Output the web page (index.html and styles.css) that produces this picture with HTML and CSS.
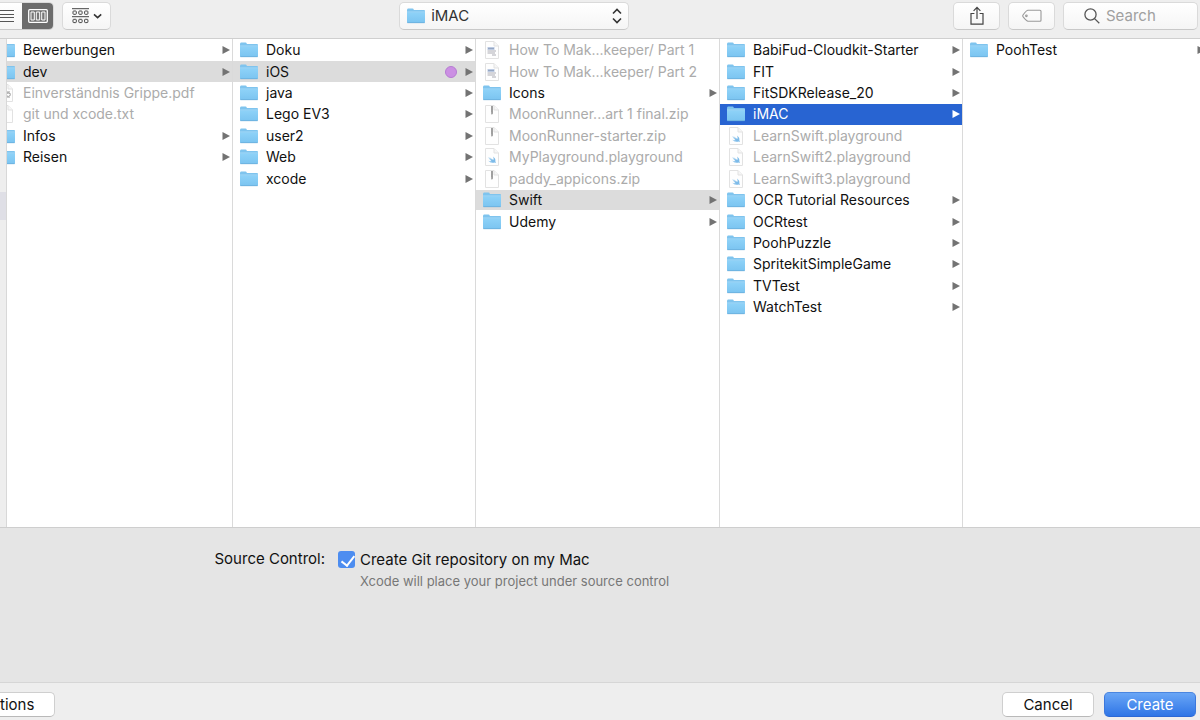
FILE: index.html
```html
<!DOCTYPE html>
<html lang="en">
<head>
<meta charset="utf-8">
<title>Save project</title>
<link rel="stylesheet" href="styles.css">
</head>
<body>
<svg class="sprites" aria-hidden="true">
  <defs>
    <linearGradient id="folder-fill" x1="0" y1="0" x2="0" y2="1">
      <stop offset="0" stop-color="#8ed2f8"/><stop offset="1" stop-color="#7cc5f1"/>
    </linearGradient>
    <symbol id="folder" viewBox="0 0 18 16">
      <path d="M0 2.2Q0 .6 1 .6H5.6Q6.4 .6 6.8 1.8L7 2.1H17Q18 2.1 18 3V14Q18 15 17 15H1Q0 15 0 14Z" fill="#7fc4ee"/>
      <path d="M0 4.3H18V14.2H0Z" fill="url(#folder-fill)"/>
      <path d="M0 3.9H18" stroke="#a9dcf9" stroke-width=".8"/>
      <path d="M.3 14.7H17.7" stroke="#64abd8" stroke-width=".7"/>
    </symbol>
    <symbol id="page" viewBox="0 0 18 18">
      <path d="M2.5.5H11L15.5 5V17.5H2.5Z" fill="#fefefe" stroke="#e2e2e2"/>
      <path d="M11 .5V5H15.5" fill="#f6f6f6" stroke="#e2e2e2"/>
    </symbol>
    <symbol id="playground" viewBox="0 0 18 18">
      <use href="#page"/>
      <path d="M5 9Q7.5 11.5 9 12.2Q7.5 10.9 6.2 8.9Q8.6 11 10.4 12Q11 10.5 10 8.6Q13 11 12.3 13.2Q13.1 14.2 12.7 15Q11.9 14.2 10.9 14.7Q7.5 15.5 5 12.4Q7 13.6 8.6 13.2Q6.5 11.6 5 9Z" fill="#7dbbe9"/>
    </symbol>
    <symbol id="zip" viewBox="0 0 18 18">
      <use href="#page"/>
      <path d="M8 1H10V8L9 10L8 9Z" fill="#bbb"/>
      <path d="M8 2H10M8 4H10M8 6H10M8.5 8H10" stroke="#777" stroke-width=".8"/>
    </symbol>
    <symbol id="document" viewBox="0 0 18 18">
      <use href="#page"/>
      <path d="M4.5 6H11.5V9H4.5Z" fill="#bccae2"/>
      <path d="M4.5 10H13M4.5 12H12M9 14H13" stroke="#acacb4"/>
      <path d="M5 7.5H11" stroke="#8496b5" stroke-width=".7"/>
    </symbol>
    <symbol id="pdf" viewBox="0 0 18 18">
      <use href="#page"/>
      <path d="M6 7.5H13M6 9.5H13M6 13.5H13" stroke="#ccc"/>
      <circle cx="11.3" cy="10.5" r="2" fill="none" stroke="#999"/>
    </symbol>
    <symbol id="arrow" viewBox="0 0 8 8"><path d="M.5 0L8 4L.5 8Z" fill="currentColor"/></symbol>
  </defs>
</svg>

<header class="toolbar">
  <div class="tools tools-start">
    <div class="segments">
      <button class="segment" type="button" aria-label="List view"><svg width="16" height="14" viewBox="0 0 16 14" fill="none" stroke="#555"><path d="M0 1.5H16M0 5.5H16M0 8.5H16M0 12.5H16"/></svg></button>
      <button class="segment segment-on" type="button" aria-label="Column view"><svg width="20" height="14" viewBox="0 0 20 14"><rect x=".7" y=".7" width="18.6" height="12.6" rx="1" fill="none" stroke="#fff" stroke-width="1.3"/><path d="M3 3H6.3V11H3ZM8.3 3H11.7V11H8.3ZM13.7 3H17V11H13.7Z" fill="#777" stroke="#fff"/></svg></button>
    </div>
    <button class="tool tool-group" type="button" aria-label="Group items">
      <svg width="30" height="16" viewBox="0 0 30 16" fill="none" stroke="#444"><path d="M0 .7H17M0 8.7H17" stroke-width="1"/><rect x="1" y="3" width="3.3" height="3.3" rx=".7"/><rect x="6.8" y="3" width="3.3" height="3.3" rx=".7"/><rect x="12.6" y="3" width="3.3" height="3.3" rx=".7"/><rect x="1" y="11.3" width="3.3" height="3.3" rx=".7"/><rect x="6.8" y="11.3" width="3.3" height="3.3" rx=".7"/><rect x="12.6" y="11.3" width="3.3" height="3.3" rx=".7"/><path d="M22 6.3L25.6 9.6L29.2 6.3" stroke="#333" stroke-width="1.6"/></svg>
    </button>
  </div>
  <label class="tool location">
    <svg class="icon" aria-hidden="true"><use href="#folder"/></svg>
    <select class="location-select" aria-label="Location"><option>iMAC</option></select>
    <svg width="10" height="16" viewBox="0 0 10 16" fill="none" stroke="#333" stroke-width="1.6" aria-hidden="true"><path d="M1 5.5L5 1.5L9 5.5M1 10.5L5 14.5L9 10.5"/></svg>
  </label>
  <div class="tools tools-end">
    <button class="tool" type="button" aria-label="Share"><svg width="16" height="20" viewBox="0 0 16 20" fill="none" stroke="#444" stroke-width="1.2"><path d="M5.4 7.5H2V18.2H14V7.5H10.6M8 13V1.5M4.6 4.8L8 1.3L11.4 4.8"/></svg></button>
    <button class="tool" type="button" aria-label="Tags"><svg width="20" height="14" viewBox="0 0 20 14" fill="none" stroke="#999" stroke-width="1.1"><path d="M6 1.3H18Q19 1.3 19 2.3V11.2Q19 12.2 18 12.2H6Q4.5 12.2 1 7.6Q.5 6.8 1 6Q4.5 1.3 6 1.3Z"/><circle cx="4.4" cy="6.8" r=".8"/></svg></button>
    <label class="tool search">
      <svg width="16" height="16" viewBox="0 0 16 16" fill="none" stroke="#555" stroke-width="1.3" aria-hidden="true"><circle cx="6.5" cy="6.5" r="5.6"/><path d="M10.6 10.6L15.3 15.3"/></svg>
      <input class="search-input" type="search" placeholder="Search" aria-label="Search">
    </label>
  </div>
</header>

<main class="browser">
  <div class="sidebar"><div class="sidebar-mark"></div></div>
  <div class="column">
    <ul class="list list-scrolled">
      <li class="row"><svg class="icon"><use href="#folder"/></svg><span class="name">Bewerbungen</span><svg class="arrow"><use href="#arrow"/></svg></li>
      <li class="row row-open"><svg class="icon"><use href="#folder"/></svg><span class="name">dev</span><svg class="arrow"><use href="#arrow"/></svg></li>
      <li class="row row-off"><svg class="icon"><use href="#pdf"/></svg><span class="name">Einverständnis Grippe.pdf</span></li>
      <li class="row row-off"><svg class="icon"><use href="#page"/></svg><span class="name">git und xcode.txt</span></li>
      <li class="row"><svg class="icon"><use href="#folder"/></svg><span class="name">Infos</span><svg class="arrow"><use href="#arrow"/></svg></li>
      <li class="row"><svg class="icon"><use href="#folder"/></svg><span class="name">Reisen</span><svg class="arrow"><use href="#arrow"/></svg></li>
    </ul>
  </div>
  <div class="column">
    <ul class="list">
      <li class="row"><svg class="icon"><use href="#folder"/></svg><span class="name">Doku</span><svg class="arrow"><use href="#arrow"/></svg></li>
      <li class="row row-open"><svg class="icon"><use href="#folder"/></svg><span class="name">iOS</span><span class="tag"></span><svg class="arrow"><use href="#arrow"/></svg></li>
      <li class="row"><svg class="icon"><use href="#folder"/></svg><span class="name">java</span><svg class="arrow"><use href="#arrow"/></svg></li>
      <li class="row"><svg class="icon"><use href="#folder"/></svg><span class="name">Lego EV3</span><svg class="arrow"><use href="#arrow"/></svg></li>
      <li class="row"><svg class="icon"><use href="#folder"/></svg><span class="name">user2</span><svg class="arrow"><use href="#arrow"/></svg></li>
      <li class="row"><svg class="icon"><use href="#folder"/></svg><span class="name">Web</span><svg class="arrow"><use href="#arrow"/></svg></li>
      <li class="row"><svg class="icon"><use href="#folder"/></svg><span class="name">xcode</span><svg class="arrow"><use href="#arrow"/></svg></li>
    </ul>
  </div>
  <div class="column">
    <ul class="list">
      <li class="row row-off"><svg class="icon"><use href="#document"/></svg><span class="name">How To Mak...keeper/ Part 1</span></li>
      <li class="row row-off"><svg class="icon"><use href="#document"/></svg><span class="name">How To Mak...keeper/ Part 2</span></li>
      <li class="row"><svg class="icon"><use href="#folder"/></svg><span class="name">Icons</span><svg class="arrow"><use href="#arrow"/></svg></li>
      <li class="row row-off"><svg class="icon"><use href="#zip"/></svg><span class="name">MoonRunner...art 1 final.zip</span></li>
      <li class="row row-off"><svg class="icon"><use href="#zip"/></svg><span class="name">MoonRunner-starter.zip</span></li>
      <li class="row row-off"><svg class="icon"><use href="#playground"/></svg><span class="name">MyPlayground.playground</span></li>
      <li class="row row-off"><svg class="icon"><use href="#zip"/></svg><span class="name">paddy_appicons.zip</span></li>
      <li class="row row-open"><svg class="icon"><use href="#folder"/></svg><span class="name">Swift</span><svg class="arrow"><use href="#arrow"/></svg></li>
      <li class="row"><svg class="icon"><use href="#folder"/></svg><span class="name">Udemy</span><svg class="arrow"><use href="#arrow"/></svg></li>
    </ul>
  </div>
  <div class="column">
    <ul class="list">
      <li class="row"><svg class="icon"><use href="#folder"/></svg><span class="name">BabiFud-Cloudkit-Starter</span><svg class="arrow"><use href="#arrow"/></svg></li>
      <li class="row"><svg class="icon"><use href="#folder"/></svg><span class="name">FIT</span><svg class="arrow"><use href="#arrow"/></svg></li>
      <li class="row"><svg class="icon"><use href="#folder"/></svg><span class="name">FitSDKRelease_20</span><svg class="arrow"><use href="#arrow"/></svg></li>
      <li class="row row-selected"><svg class="icon"><use href="#folder"/></svg><span class="name">iMAC</span><svg class="arrow"><use href="#arrow"/></svg></li>
      <li class="row row-off"><svg class="icon"><use href="#playground"/></svg><span class="name">LearnSwift.playground</span></li>
      <li class="row row-off"><svg class="icon"><use href="#playground"/></svg><span class="name">LearnSwift2.playground</span></li>
      <li class="row row-off"><svg class="icon"><use href="#playground"/></svg><span class="name">LearnSwift3.playground</span></li>
      <li class="row"><svg class="icon"><use href="#folder"/></svg><span class="name">OCR Tutorial Resources</span><svg class="arrow"><use href="#arrow"/></svg></li>
      <li class="row"><svg class="icon"><use href="#folder"/></svg><span class="name">OCRtest</span><svg class="arrow"><use href="#arrow"/></svg></li>
      <li class="row"><svg class="icon"><use href="#folder"/></svg><span class="name">PoohPuzzle</span><svg class="arrow"><use href="#arrow"/></svg></li>
      <li class="row"><svg class="icon"><use href="#folder"/></svg><span class="name">SpritekitSimpleGame</span><svg class="arrow"><use href="#arrow"/></svg></li>
      <li class="row"><svg class="icon"><use href="#folder"/></svg><span class="name">TVTest</span><svg class="arrow"><use href="#arrow"/></svg></li>
      <li class="row"><svg class="icon"><use href="#folder"/></svg><span class="name">WatchTest</span><svg class="arrow"><use href="#arrow"/></svg></li>
    </ul>
  </div>
  <div class="column">
    <ul class="list list-cut">
      <li class="row"><svg class="icon"><use href="#folder"/></svg><span class="name">PoohTest</span><svg class="arrow"><use href="#arrow"/></svg></li>
    </ul>
  </div>
</main>

<section class="options">
  <span class="options-title">Source Control:</span>
  <div class="option">
    <input class="check" type="checkbox" id="git" checked aria-describedby="git-hint">
    <label for="git">Create Git repository on my Mac</label>
    <p class="hint" id="git-hint">Xcode will place your project under source control</p>
  </div>
</section>

<footer class="footer">
  <button class="button button-edge" type="button">tions</button>
  <div class="actions">
    <button class="button" type="button">Cancel</button>
    <button class="button button-primary" type="submit">Create</button>
  </div>
</footer>
</body>
</html>
```
FILE: styles.css
```css
* { box-sizing: border-box; }

body {
  margin: 0;
  min-height: 100vh;
  display: flex;
  flex-direction: column;
  overflow-x: hidden;
  background: #eeeeee;
  color: #111;
  font: 15px/20px Inter, "Liberation Sans", sans-serif;
}

button, input, select { font: inherit; color: inherit; }
svg { display: block; flex: none; }
.sprites { position: absolute; width: 0; height: 0; }

.toolbar {
  display: grid;
  grid-template-columns: 40fr 230px 57fr;
  padding: 2px 2px 8px 0;
  border-bottom: 1px solid #cfcfcf;
}
.tools { display: flex; gap: 8px; }
.tools-end { justify-content: flex-end; }

.tool, .segments {
  height: 28px;
  border: 1px solid #dadada;
  border-bottom-color: #c8c8c8;
  border-radius: 5px;
  background: linear-gradient(#ffffff, #f5f5f5);
}
.tool {
  display: flex;
  align-items: center;
  justify-content: center;
  width: 47px;
  padding: 0;
}
.segments {
  display: flex;
  width: 54px;
  border-left: 0;
  border-radius: 0 5px 5px 0;
  overflow: hidden;
}
.segment {
  display: flex;
  align-items: center;
  justify-content: flex-end;
  width: 22px;
  padding: 0 8px 0 0;
  border: 0;
  background: transparent;
}
.segment-on {
  flex: 1;
  justify-content: center;
  padding: 0;
  background: #6c6c6c;
}
.tool-group { width: 49px; }

.location {
  width: 100%;
  gap: 6px;
  padding: 0 6px 0 7px;
  color: #333;
}
.location-select {
  flex: 1;
  min-width: 0;
  padding: 0;
  border: 0;
  background: transparent;
  appearance: none;
}
.search {
  width: 135px;
  justify-content: flex-start;
  gap: 6px;
  padding-left: 20px;
}
.search-input {
  width: 90px;
  padding: 0;
  border: 0;
  outline: 0;
  background: transparent;
  appearance: none;
}
.search-input::placeholder { color: #a0a0a0; }

.browser {
  flex: 1;
  display: grid;
  grid-template-columns: 7px 226fr 243fr 244fr 243fr 237fr;
  background: #fff;
  font-size: 14px;
}
.sidebar {
  padding-top: 153px;
  border-right: 1px solid #d8d8d8;
  background: #eeeeee;
}
.sidebar-mark { height: 28px; background: #dfdfe6; }
.column {
  min-width: 0;
  overflow: hidden;
  border-right: 1px solid #dadada;
}
.column:last-child { border-right: 0; }

.list {
  display: grid;
  grid-template-rows: repeat(14, 1fr);
  row-gap: 1px;
  height: 299px;
  margin: 1px 0 0;
  padding: 0;
  list-style: none;
}
.list-scrolled { margin-left: -17px; }
.list-cut { margin-right: -7px; }

.row {
  display: flex;
  align-items: center;
  padding: 0 2px 0 7px;
  white-space: nowrap;
}
.row-open { background: #dcdcdc; }
.row-off { color: #ababab; }
.row-selected { background: #2864d2; color: #fff; }
.icon { width: 18px; height: 18px; }
.row .icon { margin-right: 8px; }
.name { flex: 1; }
.arrow { width: 8px; height: 8px; color: #737373; }
.row-selected .arrow { color: #fff; }
.tag {
  width: 12px;
  height: 12px;
  margin-right: 8px;
  border: 1px solid #b67bd2;
  border-radius: 50%;
  background: #cb8fe3;
}

.options {
  display: grid;
  grid-template-columns: 325px 1fr;
  column-gap: 13px;
  min-height: 155px;
  padding-top: 21px;
  border-top: 1px solid #cecece;
  background: #e5e5e5;
}
.options-title { text-align: right; }
.option {
  display: grid;
  grid-template-columns: 17px 1fr;
  grid-auto-rows: 21px;
  column-gap: 5px;
  align-items: center;
}
.check {
  width: 17px;
  height: 17px;
  margin: 0;
  border-radius: 3px;
  appearance: none;
  background: #4d8df0;
}
.check::before {
  content: "";
  display: block;
  width: 6px;
  height: 11px;
  margin: 2px 0 0 6px;
  border: solid #fff;
  border-width: 0 2px 2px 0;
  transform: rotate(38deg);
}
.hint {
  grid-column: 2;
  margin: 0;
  color: #777;
  font-size: 13px;
}

.footer {
  display: flex;
  justify-content: space-between;
  padding: 9px 4px 3px 0;
  border-top: 1px solid #d6d6d6;
}
.actions { display: flex; gap: 10px; }
.button {
  width: 92px;
  height: 25px;
  padding: 0;
  border: 1px solid #cfcfcf;
  border-bottom-color: #b9b9b9;
  border-radius: 5px;
  background: #fff;
}
.button-edge {
  width: 55px;
  padding-right: 20px;
  border-left: 0;
  border-radius: 0 5px 5px 0;
  text-align: right;
}
.button-primary {
  border-color: #4a86e0 #3c78dc #2c68d4;
  background: linear-gradient(#69a6f6, #2f75e6);
  color: #fff;
}
```
